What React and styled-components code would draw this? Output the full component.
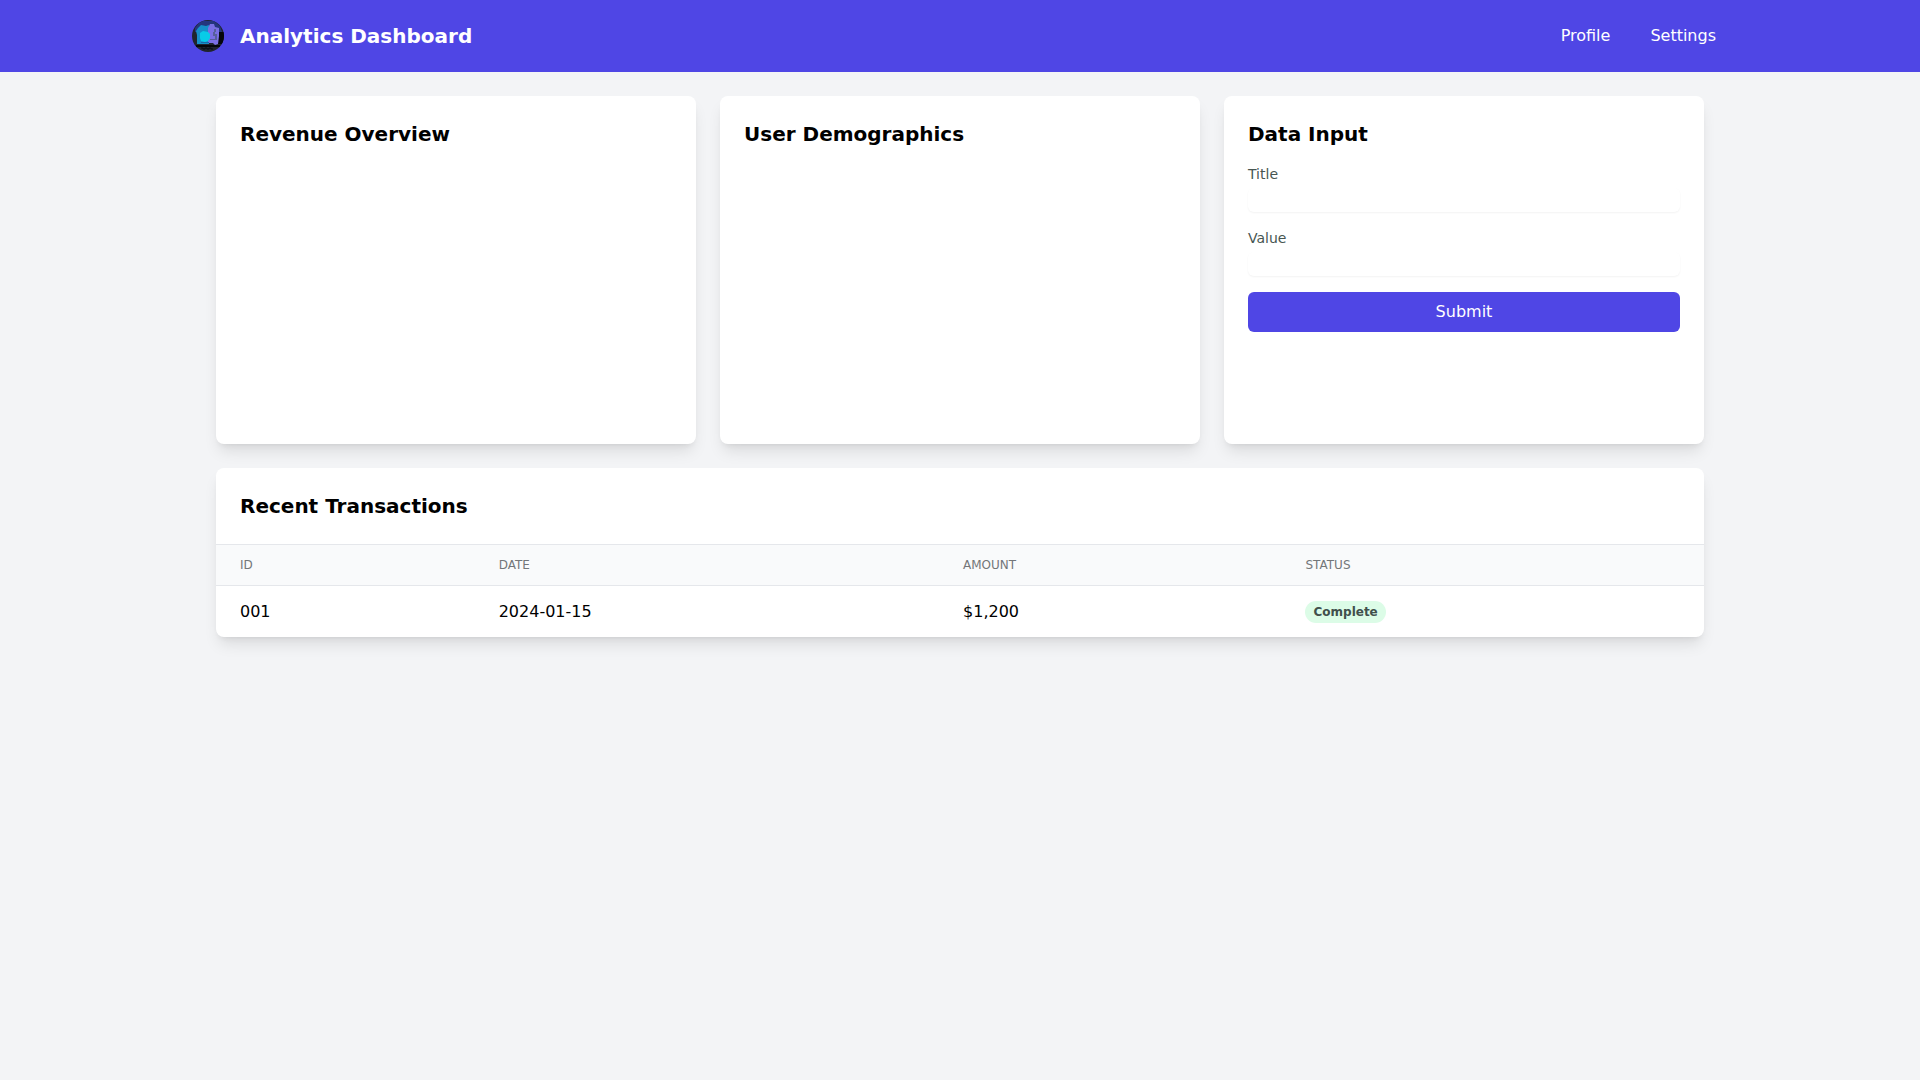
import React, { useState } from 'react';
import styled, { createGlobalStyle } from 'styled-components';

const GlobalStyle = createGlobalStyle`
  *, *::before, *::after {
    box-sizing: border-box;
  }

  body {
    margin: 0;
    background-color: #f3f4f6;
    color: #000;
    font-family: 'DejaVu Sans', sans-serif;
    font-size: 16px;
    line-height: 24px;
  }
`;

const Header = styled.header`
  background-color: #4f46e5;
  color: #fff;
`;

const HeaderInner = styled.div`
  max-width: 1536px;
  margin: 0 auto;
  padding: 16px 0;
  display: flex;
  align-items: center;
  justify-content: space-between;
`;

const Brand = styled.div`
  display: flex;
  align-items: center;
  gap: 16px;
`;

const BrandName = styled.h1`
  margin: 0;
  font-size: 20px;
  line-height: 28px;
  font-weight: 700;
`;

const Nav = styled.nav`
  display: flex;
  gap: 16px;
`;

const NavLink = styled.a`
  padding: 8px 12px;
  border-radius: 6px;
  color: inherit;
  text-decoration: none;

  &:hover {
    background-color: #4338ca;
  }
`;

const Main = styled.main`
  max-width: 1536px;
  margin: 0 auto;
  padding: 24px;
`;

const CardGrid = styled.div`
  display: grid;
  grid-template-columns: repeat(3, minmax(0, 1fr));
  gap: 24px;
  margin-bottom: 24px;
`;

const Card = styled.section`
  padding: ${props => (props.$flush ? '0' : '24px')};
  background-color: #fff;
  border-radius: 8px;
  box-shadow: 0 10px 15px -3px rgba(0, 0, 0, 0.1), 0 4px 6px -4px rgba(0, 0, 0, 0.1);
  overflow: hidden;
`;

const CardTitle = styled.h2`
  margin: ${props => (props.$flush ? '24px' : '0 0 16px')};
  font-size: 20px;
  line-height: 28px;
  font-weight: 700;
`;

const ChartArea = styled.div`
  height: 256px;
`;

const Form = styled.form`
  display: flex;
  flex-direction: column;
  gap: 16px;
`;

const Field = styled.div`
  display: flex;
  flex-direction: column;
  gap: 4px;
`;

const Label = styled.label`
  font-size: 14px;
  line-height: 20px;
  color: #475652;
`;

const Input = styled.input`
  width: 100%;
  height: 24px;
  padding: 0;
  border: none;
  border-radius: 6px;
  background-color: #fff;
  box-shadow: 0 1px 2px 0 rgba(0, 0, 0, 0.05);
  font: inherit;
`;

const SubmitButton = styled.button`
  width: 100%;
  padding: 8px 16px;
  border: none;
  border-radius: 6px;
  background-color: #4f46e5;
  color: #fff;
  font: inherit;
  cursor: pointer;

  &:hover {
    background-color: #4338ca;
  }
`;

const Table = styled.table`
  width: 100%;
  border-collapse: collapse;
`;

const TableHead = styled.thead`
  background-color: #f9fafb;
  border-top: 1px solid #e5e7eb;
  border-bottom: 1px solid #e5e7eb;
`;

const HeadCell = styled.th`
  padding: 12px 24px;
  font-size: 12px;
  line-height: 16px;
  font-weight: 400;
  text-align: left;
  text-transform: uppercase;
  color: #737679;
`;

const Cell = styled.td`
  padding: 14px 24px 13px;
  vertical-align: middle;
`;

const Badge = styled.span`
  display: block;
  width: fit-content;
  padding: 4px 8px;
  border-radius: 9999px;
  background-color: #dcfce7;
  color: #41504c;
  font-size: 12px;
  line-height: 14px;
  font-weight: 700;
`;

const transactions = [
  { id: '001', date: '2024-01-15', amount: '$1,200', status: 'Complete' }
];

const Logo = () => (
  <svg width="32" height="32" viewBox="0 0 32 32" aria-hidden="true">
    <defs>
      <clipPath id="logo-clip">
        <circle cx="16" cy="16" r="16" />
      </clipPath>
    </defs>
    <g clipPath="url(#logo-clip)">
      <rect width="32" height="32" fill="#20242e" />
      <path d="M3 8l4-5 4-2h11l6 5 2 6H3z" fill="#24357e" />
      <path d="M27 12h5v12h-6z" fill="#05060c" />
      <path d="M6 8l3-3 5 1 3-1v19H5V15l-1-4z" fill="#168fc9" />
      <path d="M16 8l2-4h4l1 3 4 1v8l-1 8-3 1-2-2h-5z" fill="#7a6fe4" />
      <path d="M8 13l3-2 5 1 2 2v4l-2 3-3 1-4-1-1-3z" fill="#08cbe8" />
      <path d="M22 9h2v3h-1v2h2v6h-7v-1h5v-3h-2v-4h1z" fill="#575f9a" />
      <path d="M9 22h8v1H9z" fill="#1768a6" />
      <path d="M4 25h24v2H4z" fill="#05070b" />
      <path d="M9 28h2v1h2v-1h2v1h2v-1h2v1h2" stroke="#090c12" fill="none" />
    </g>
  </svg>
);

const App = () => {
  const [entry, setEntry] = useState({ title: '', value: '' });

  const handleChange = (e) => {
    setEntry({ ...entry, [e.target.name]: e.target.value });
  };

  const handleSubmit = (e) => {
    e.preventDefault();
    setEntry({ title: '', value: '' });
  };

  return (
    <>
      <GlobalStyle />
      <Header>
        <HeaderInner>
          <Brand>
            <Logo />
            <BrandName>Analytics Dashboard</BrandName>
          </Brand>
          <Nav>
            <NavLink href="#profile">Profile</NavLink>
            <NavLink href="#settings">Settings</NavLink>
          </Nav>
        </HeaderInner>
      </Header>

      <Main>
        <CardGrid>
          <Card>
            <CardTitle>Revenue Overview</CardTitle>
            <ChartArea />
          </Card>
          <Card>
            <CardTitle>User Demographics</CardTitle>
            <ChartArea />
          </Card>
          <Card>
            <CardTitle>Data Input</CardTitle>
            <Form onSubmit={handleSubmit}>
              <Field>
                <Label htmlFor="title">Title</Label>
                <Input id="title" name="title" type="text" value={entry.title} onChange={handleChange} />
              </Field>
              <Field>
                <Label htmlFor="value">Value</Label>
                <Input id="value" name="value" type="number" value={entry.value} onChange={handleChange} />
              </Field>
              <SubmitButton type="submit">Submit</SubmitButton>
            </Form>
          </Card>
        </CardGrid>

        <Card $flush>
          <CardTitle $flush>Recent Transactions</CardTitle>
          <Table>
            <TableHead>
              <tr>
                <HeadCell>ID</HeadCell>
                <HeadCell>Date</HeadCell>
                <HeadCell>Amount</HeadCell>
                <HeadCell>Status</HeadCell>
              </tr>
            </TableHead>
            <tbody>
              {transactions.map(item => (
                <tr key={item.id}>
                  <Cell>{item.id}</Cell>
                  <Cell>{item.date}</Cell>
                  <Cell>{item.amount}</Cell>
                  <Cell><Badge>{item.status}</Badge></Cell>
                </tr>
              ))}
            </tbody>
          </Table>
        </Card>
      </Main>
    </>
  );
};

export default App;
